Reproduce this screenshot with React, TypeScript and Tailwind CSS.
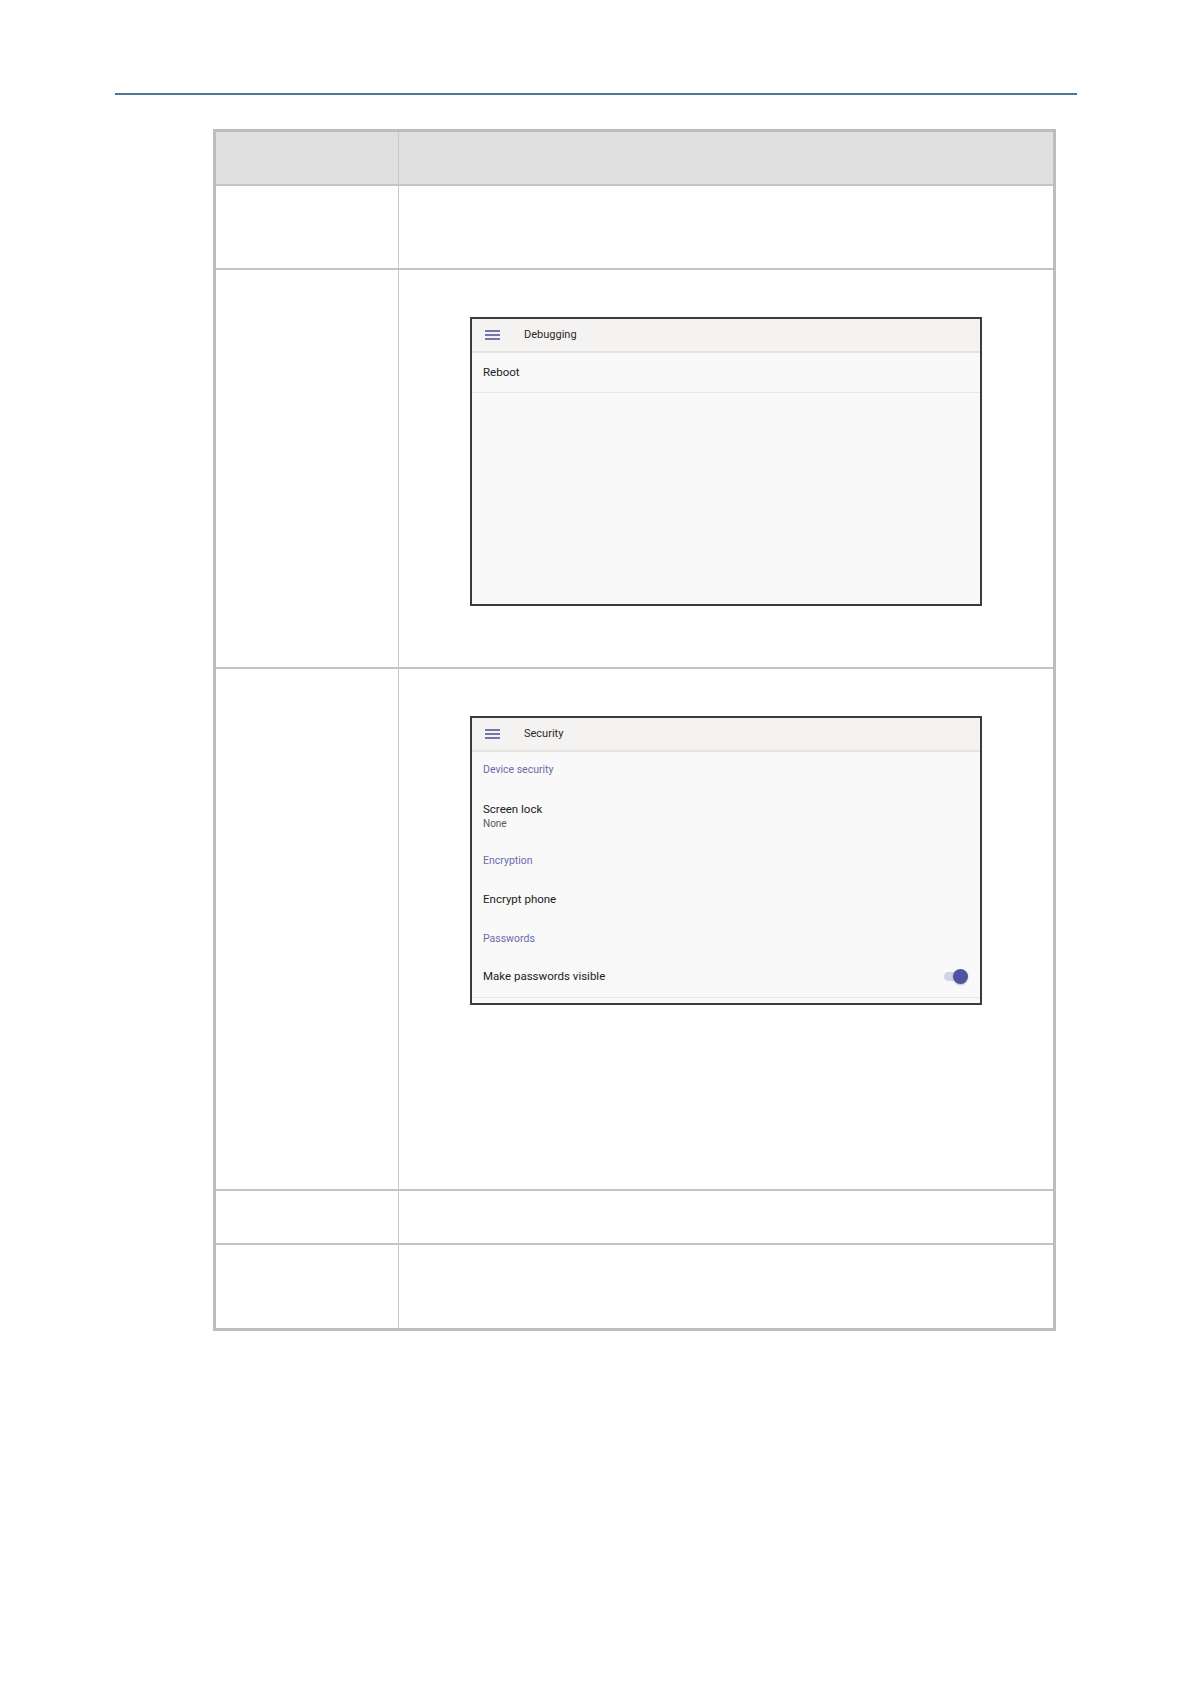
import React from "react";

function MenuIcon() {
  return (
    <div className="flex w-[15px] flex-col gap-[2.5px]">
      <div className="h-[1.5px] w-full bg-[#7474ae]" />
      <div className="h-[1.5px] w-full bg-[#7474ae]" />
      <div className="h-[1.5px] w-full bg-[#7474ae]" />
    </div>
  );
}

function TitleBar({ title }: { title: string }) {
  return (
    <div className="flex h-[34px] shrink-0 items-center border-b-2 border-[#e3e3e3] bg-[#f4f3f1] pl-[13px]">
      <MenuIcon />
      <span className="ml-[24px] text-[11px] text-[#2a2a2a]">{title}</span>
    </div>
  );
}

function Category({ label, h }: { label: string; h: string }) {
  return (
    <div className={`flex items-center pl-[11px] ${h}`}>
      <span className="text-[10.5px] text-[#6b6baa]">{label}</span>
    </div>
  );
}

function Toggle() {
  return (
    <div className="relative h-[15px] w-[24px]">
      <div className="absolute left-0 top-[3px] h-[9px] w-[20px] rounded-full bg-[#d3d3e8]" />
      <div className="absolute right-0 top-0 h-[15px] w-[15px] rounded-full bg-[#5252a2] shadow-[0_1px_2px_rgba(0,0,0,0.25)]" />
    </div>
  );
}

function DebuggingScreen() {
  return (
    <div className="flex h-[289px] w-[512px] flex-col overflow-hidden border-2 border-[#3b3b3b] bg-[#f9f9f9]">
      <TitleBar title="Debugging" />
      <div className="flex h-[40px] items-center border-b border-[#e8e8e8] pl-[11px]">
        <span className="text-[11.5px] text-[#212121]">Reboot</span>
      </div>
    </div>
  );
}

function SecurityScreen() {
  return (
    <div className="flex h-[289px] w-[512px] flex-col overflow-hidden border-2 border-[#3b3b3b] bg-[#f9f9f9]">
      <TitleBar title="Security" />
      <Category label="Device security" h="h-[36px]" />
      <div className="flex h-[56px] flex-col justify-center pl-[11px]">
        <span className="text-[11.5px] leading-[15px] text-[#212121]">Screen lock</span>
        <span className="text-[10px] leading-[14px] text-[#5a5a5a]">None</span>
      </div>
      <Category label="Encryption" h="h-[34px]" />
      <div className="flex h-[44px] items-center pl-[11px]">
        <span className="text-[11.5px] text-[#212121]">Encrypt phone</span>
      </div>
      <Category label="Passwords" h="h-[34px]" />
      <div className="flex h-[42px] items-center justify-between border-b border-[#e8e8e8] pl-[11px] pr-[12px]">
        <span className="text-[11.5px] text-[#212121]">Make passwords visible</span>
        <Toggle />
      </div>
    </div>
  );
}

function Row({
  h,
  last,
  header,
  children,
}: {
  h: string;
  last?: boolean;
  header?: boolean;
  children?: React.ReactNode;
}) {
  return (
    <div
      className={`flex ${h} ${last ? "" : "border-b-2 border-[#c4c4c4]"} ${
        header ? "bg-[#e0e0e0]" : "bg-white"
      }`}
    >
      <div className="w-[183px] shrink-0 border-r border-[#c8c8c8]" />
      <div className="flex-1">{children}</div>
    </div>
  );
}

export default function App() {
  return (
    <div
      className="h-[1684px] w-[1191px] bg-white pt-[93px]"
      style={{ fontFamily: "Roboto, 'Noto Sans', sans-serif" }}
    >
      <div className="ml-[115px] h-[2px] w-[962px] bg-[#4f7596]" />
      <div className="ml-[213px] mt-[34px] w-[843px] border-[3px] border-[#bdbdbd]">
        <Row h="h-[54px]" header />
        <Row h="h-[84px]" />
        <Row h="h-[399px]">
          <div className="pl-[71px] pt-[47px]">
            <DebuggingScreen />
          </div>
        </Row>
        <Row h="h-[522px]">
          <div className="pl-[71px] pt-[47px]">
            <SecurityScreen />
          </div>
        </Row>
        <Row h="h-[54px]" />
        <Row h="h-[83px]" last />
      </div>
    </div>
  );
}
